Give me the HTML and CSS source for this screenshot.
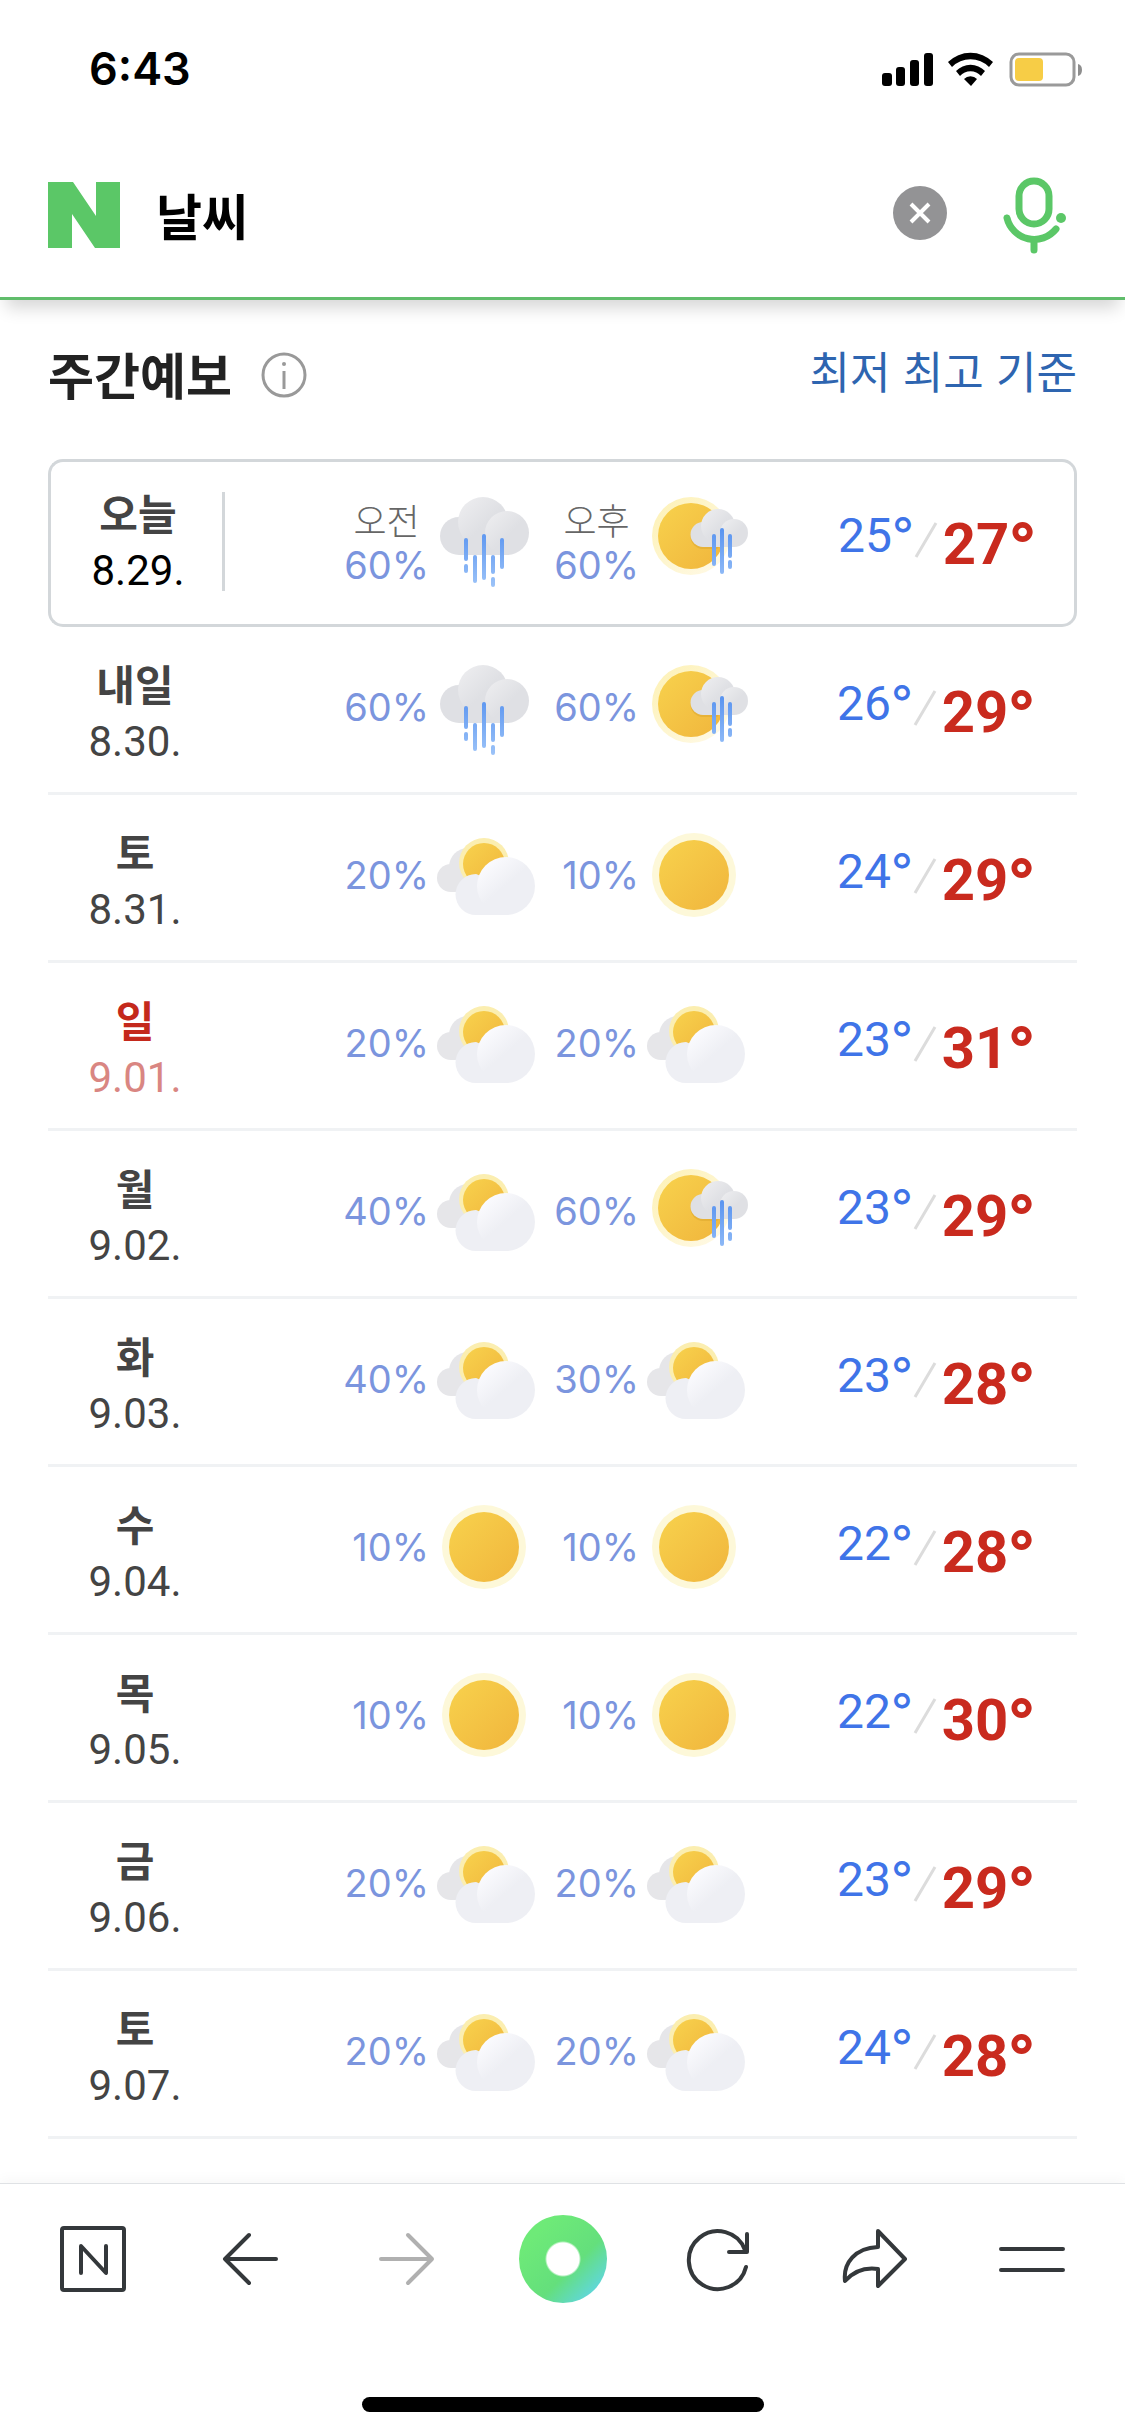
FILE: index.html
```
<!DOCTYPE html>
<html lang="ko">
<head>
<meta charset="utf-8">
<meta name="viewport" content="width=device-width, initial-scale=1">
<title>날씨</title>
<link rel="stylesheet" href="styles.css">
</head>
<body>
<svg class="sprite" aria-hidden="true">
  <defs>
    <linearGradient id="g-sun" x1="0.1" y1="0.1" x2="0.9" y2="0.9">
      <stop offset="0" stop-color="#f7cf4b"/><stop offset="1" stop-color="#f1b83e"/>
    </linearGradient>
    <linearGradient id="g-halo" x1="0" y1="0" x2="1" y2="1">
      <stop offset="0" stop-color="#fdf1b4"/><stop offset="1" stop-color="#fffaea"/>
    </linearGradient>
    <linearGradient id="g-grey" x1="0" y1="0" x2="0.9" y2="0.9">
      <stop offset="0" stop-color="#efeff1"/><stop offset="0.6" stop-color="#dfe0e4"/>
    </linearGradient>
    <linearGradient id="g-white" x1="0.1" y1="0.1" x2="0.7" y2="0.8">
      <stop offset="0" stop-color="#fcfcff"/><stop offset="0.6" stop-color="#eeeff4"/>
    </linearGradient>
    <linearGradient id="g-drop" gradientUnits="userSpaceOnUse" x1="0" y1="45" x2="0" y2="102">
      <stop offset="0" stop-color="#5b95f0"/><stop offset="1" stop-color="#9cc3f8"/>
    </linearGradient>
  </defs>
  <symbol id="w-rain" viewBox="0 0 108 108">
    <path d="M27 32a19 19 0 0 0 0 38h48V50L40 32z" fill="#dfe0e4"/>
    <circle cx="51" cy="37" r="25" fill="url(#g-grey)"/>
    <circle cx="75" cy="48" r="22" fill="url(#g-grey)"/>
    <path d="M34 55v19M34 81v5M43 72v24M52 51v42M61 72v15M61 94v6M70 55v27" fill="none" stroke="url(#g-drop)" stroke-width="4" stroke-linecap="round"/>
  </symbol>
  <symbol id="w-sunrain" viewBox="0 0 108 108">
    <circle cx="49" cy="51" r="39" fill="url(#g-halo)"/>
    <circle cx="49" cy="51" r="33" fill="url(#g-sun)"/>
    <path d="M61 39a12 12 0 0 0 0 25h14l4-4V40z" fill="#dca62c" opacity="0.5"/>
    <path d="M61 37a12 12 0 0 0 0 25h31V48L72 37z" fill="#dfe0e4"/>
    <circle cx="76" cy="41" r="17" fill="url(#g-grey)"/>
    <circle cx="92" cy="48" r="14" fill="url(#g-grey)"/>
    <path d="M72 51v28M80 45v42M88 51v20M88 77v5" fill="none" stroke="url(#g-drop)" stroke-width="4" stroke-linecap="round"/>
  </symbol>
  <symbol id="w-partly" viewBox="0 0 108 108">
    <circle cx="36" cy="46" r="19" fill="#e6e6e9"/>
    <path d="M19 43a14 14 0 0 0 0 28h25V50z" fill="#e6e6e9"/>
    <circle cx="52" cy="42" r="25" fill="#fbeeb0"/>
    <circle cx="52" cy="43" r="21" fill="url(#g-sun)"/>
    <path d="M44 53a20 20 0 0 0 0 41h30V65z" fill="#eeeff4"/>
    <circle cx="74" cy="65" r="29" fill="url(#g-white)"/>
  </symbol>
  <symbol id="w-sun" viewBox="0 0 108 108">
    <circle cx="52" cy="54" r="42" fill="#fdf8d9"/>
    <circle cx="52" cy="54" r="35" fill="url(#g-sun)"/>
  </symbol>
  <symbol id="slash" viewBox="0 0 24 38">
    <path d="M2 36L22 2" fill="none" stroke="#dcdcdc" stroke-width="3"/>
  </symbol>
</svg>

<div class="status">
  <time>6:43</time>
  <svg width="202" height="36" viewBox="0 0 202 36" aria-hidden="true">
    <g><rect x="1" y="22" width="10" height="13" rx="3"/><rect x="15" y="16" width="9" height="19" rx="3"/><rect x="29" y="9" width="9" height="26" rx="3"/><rect x="43" y="2" width="9" height="33" rx="3"/></g>
    <path d="M67 11a32 32 0 0 1 45 0l-4 5a26 26 0 0 0-37 0z"/>
    <path d="M75 20a20 20 0 0 1 29 0l-4 5a14 14 0 0 0-21 0z"/>
    <path d="M83 28a9 9 0 0 1 13 0l-6 7z"/>
    <rect x="130" y="3" width="63" height="31" rx="8" fill="none" stroke="#9a9a9a" stroke-width="3"/>
    <rect x="134" y="7" width="28" height="23" rx="4" fill="#f7cd46"/>
    <path d="M197 13q4 1 4 6t-4 6z" fill="#8e8e8e"/>
  </svg>
</div>

<header class="search">
  <a href="#" aria-label="네이버">
    <svg width="72" height="66" viewBox="0 0 72 66"><path d="M0 0h25l23 34V0h24v66H47L24 32v34H0z" fill="#5bc767"/></svg>
  </a>
  <input type="text" value="날씨" aria-label="검색어">
  <button type="button" class="clear" aria-label="지우기">
    <svg width="54" height="54" viewBox="0 0 54 54"><circle cx="27" cy="27" r="27" fill="#939395"/><path d="M18 18l18 18M36 18L18 36" stroke="#fff" stroke-width="4"/></svg>
  </button>
  <button type="button" class="mic" aria-label="음성 검색">
    <svg width="66" height="80" viewBox="0 0 66 80"><g fill="none" stroke="#5bc767" stroke-width="7" stroke-linecap="round"><rect x="17" y="6" width="30" height="43" rx="15"/><path d="M5 43a28 28 0 0 0 49 11M32 66v9"/></g><circle cx="59" cy="43" r="5" fill="#5bc767"/></svg>
  </button>
</header>

<main>
  <div class="title">
    <h1>주간예보</h1>
    <button type="button" aria-label="안내">
      <svg width="46" height="46" viewBox="0 0 46 46"><circle cx="23" cy="23" r="21" fill="none" stroke="#999" stroke-width="3"/><path d="M23 19v18" stroke="#999" stroke-width="3"/><circle cx="23" cy="12" r="2" fill="#999"/></svg>
    </button>
    <a href="#">최저 최고 기준</a>
  </div>
  <table>
    <tbody>
      <tr class="today">
        <th scope="row"><span class="day">오늘</span><span class="date">8.29.</span></th>
        <td><div class="half"><span class="rate"><small>오전</small>60%</span><svg><use href="#w-rain"/></svg></div></td>
        <td><div class="half"><span class="rate"><small>오후</small>60%</span><svg><use href="#w-sunrain"/></svg></div></td>
        <td><div class="temps"><span class="low">25<i>°</i></span><svg><use href="#slash"/></svg><strong>27<i>°</i></strong></div></td>
      </tr>
      <tr>
        <th scope="row"><span class="day">내일</span><span class="date">8.30.</span></th>
        <td><div class="half"><span class="rate">60%</span><svg><use href="#w-rain"/></svg></div></td>
        <td><div class="half"><span class="rate">60%</span><svg><use href="#w-sunrain"/></svg></div></td>
        <td><div class="temps"><span class="low">26<i>°</i></span><svg><use href="#slash"/></svg><strong>29<i>°</i></strong></div></td>
      </tr>
      <tr>
        <th scope="row"><span class="day">토</span><span class="date">8.31.</span></th>
        <td><div class="half"><span class="rate">20%</span><svg><use href="#w-partly"/></svg></div></td>
        <td><div class="half"><span class="rate">10%</span><svg><use href="#w-sun"/></svg></div></td>
        <td><div class="temps"><span class="low">24<i>°</i></span><svg><use href="#slash"/></svg><strong>29<i>°</i></strong></div></td>
      </tr>
      <tr class="sunday">
        <th scope="row"><span class="day">일</span><span class="date">9.01.</span></th>
        <td><div class="half"><span class="rate">20%</span><svg><use href="#w-partly"/></svg></div></td>
        <td><div class="half"><span class="rate">20%</span><svg><use href="#w-partly"/></svg></div></td>
        <td><div class="temps"><span class="low">23<i>°</i></span><svg><use href="#slash"/></svg><strong>31<i>°</i></strong></div></td>
      </tr>
      <tr>
        <th scope="row"><span class="day">월</span><span class="date">9.02.</span></th>
        <td><div class="half"><span class="rate">40%</span><svg><use href="#w-partly"/></svg></div></td>
        <td><div class="half"><span class="rate">60%</span><svg><use href="#w-sunrain"/></svg></div></td>
        <td><div class="temps"><span class="low">23<i>°</i></span><svg><use href="#slash"/></svg><strong>29<i>°</i></strong></div></td>
      </tr>
      <tr>
        <th scope="row"><span class="day">화</span><span class="date">9.03.</span></th>
        <td><div class="half"><span class="rate">40%</span><svg><use href="#w-partly"/></svg></div></td>
        <td><div class="half"><span class="rate">30%</span><svg><use href="#w-partly"/></svg></div></td>
        <td><div class="temps"><span class="low">23<i>°</i></span><svg><use href="#slash"/></svg><strong>28<i>°</i></strong></div></td>
      </tr>
      <tr>
        <th scope="row"><span class="day">수</span><span class="date">9.04.</span></th>
        <td><div class="half"><span class="rate">10%</span><svg><use href="#w-sun"/></svg></div></td>
        <td><div class="half"><span class="rate">10%</span><svg><use href="#w-sun"/></svg></div></td>
        <td><div class="temps"><span class="low">22<i>°</i></span><svg><use href="#slash"/></svg><strong>28<i>°</i></strong></div></td>
      </tr>
      <tr>
        <th scope="row"><span class="day">목</span><span class="date">9.05.</span></th>
        <td><div class="half"><span class="rate">10%</span><svg><use href="#w-sun"/></svg></div></td>
        <td><div class="half"><span class="rate">10%</span><svg><use href="#w-sun"/></svg></div></td>
        <td><div class="temps"><span class="low">22<i>°</i></span><svg><use href="#slash"/></svg><strong>30<i>°</i></strong></div></td>
      </tr>
      <tr>
        <th scope="row"><span class="day">금</span><span class="date">9.06.</span></th>
        <td><div class="half"><span class="rate">20%</span><svg><use href="#w-partly"/></svg></div></td>
        <td><div class="half"><span class="rate">20%</span><svg><use href="#w-partly"/></svg></div></td>
        <td><div class="temps"><span class="low">23<i>°</i></span><svg><use href="#slash"/></svg><strong>29<i>°</i></strong></div></td>
      </tr>
      <tr>
        <th scope="row"><span class="day">토</span><span class="date">9.07.</span></th>
        <td><div class="half"><span class="rate">20%</span><svg><use href="#w-partly"/></svg></div></td>
        <td><div class="half"><span class="rate">20%</span><svg><use href="#w-partly"/></svg></div></td>
        <td><div class="temps"><span class="low">24<i>°</i></span><svg><use href="#slash"/></svg><strong>28<i>°</i></strong></div></td>
      </tr>
    </tbody>
  </table>
</main>

<nav class="toolbar">
  <div class="tools">
    <button type="button" aria-label="홈"><svg viewBox="0 0 88 88"><rect x="13" y="13" width="62" height="62" rx="2"/><path d="M32 58V31l25 27V31"/></svg></button>
    <button type="button" aria-label="뒤로"><svg viewBox="0 0 88 88"><path d="M70 44H19M43 20L19 44l24 24"/></svg></button>
    <button type="button" class="off" aria-label="앞으로" disabled><svg viewBox="0 0 88 88"><path d="M19 44h51M46 20l24 24-24 24"/></svg></button>
    <button type="button" class="green" aria-label="그린닷"></button>
    <button type="button" aria-label="새로고침"><svg viewBox="0 0 88 88"><path d="M71 52a29 29 0 1 1-1-17M72 19v18H54"/></svg></button>
    <button type="button" aria-label="공유"><svg viewBox="0 0 88 88"><path d="M46 16l27 28-27 27V54c-14-2-24 2-33 12C11 48 23 33 46 32z"/></svg></button>
    <button type="button" aria-label="메뉴"><svg viewBox="0 0 88 88"><path d="M13 34h62M13 55h62"/></svg></button>
  </div>
  <div class="home-bar"></div>
</nav>
</body>
</html>
```
FILE: styles.css
```
* { box-sizing: border-box; }

body {
  margin: 0;
  min-height: 100vh;
  display: flex;
  flex-direction: column;
  background: #fff;
  color: #000;
  font-family: "Noto Sans CJK KR", sans-serif;
}

button {
  padding: 0;
  border: 0;
  background: none;
  color: inherit;
}

svg { display: block; }
a { text-decoration: none; }
i { font-style: normal; }

.sprite {
  position: absolute;
  width: 0;
  height: 0;
}

/* status bar */
.status {
  display: flex;
  justify-content: space-between;
  align-items: center;
  padding: 42px 42px 0 89px;
}
.status time {
  font: 600 45px/54px Inter, sans-serif;
}

/* search header */
.search {
  display: flex;
  align-items: center;
  margin-top: 36px;
  height: 168px;
  padding: 0 57px 0 48px;
  border-bottom: 3px solid #60bd6b;
  box-shadow: 0 14px 16px -6px rgba(0, 0, 0, 0.16);
}
.search input {
  flex: 1;
  min-width: 0;
  margin-left: 36px;
  padding: 0 0 2px;
  border: 0;
  outline: 0;
  background: none;
  font: 700 50px/72px "Noto Sans CJK KR", sans-serif;
  color: #000;
}
.search .clear { padding-bottom: 4px; }
.search .mic { margin-left: 55px; }

main {
  flex: 1;
  padding: 0 48px 44px;
}

.title {
  display: flex;
  align-items: center;
  height: 159px;
  padding-bottom: 9px;
}
.title h1 {
  margin: 0 29px 0 0;
  padding-bottom: 4px;
  font-size: 50px;
  line-height: 72px;
  font-weight: 700;
  color: #222;
}
.title a {
  margin-left: auto;
  padding-bottom: 10px;
  font-size: 44px;
  line-height: 64px;
  font-weight: 400;
  color: #2e65b0;
}

/* weekly table */
table {
  width: 100%;
  border-spacing: 0;
}
th, td {
  padding: 26px 0 31px;
  border-bottom: 3px solid #f0f2f4;
  vertical-align: top;
  font-weight: 400;
}
th {
  position: relative;
  width: 174px;
  padding: 29px 0 0;
  text-align: center;
  color: #444;
}
td:nth-child(3) { width: 210px; }
td:nth-child(4) {
  width: 327px;
  padding-right: 42px;
  padding-bottom: 0;
}

.day, .date { display: block; }
.day {
  font-size: 42px;
  line-height: 54px;
  font-weight: 700;
}
.date {
  font: 400 42px/64px Roboto, sans-serif;
}
.sunday .day { color: #c4291c; }
.sunday .date { color: #d98682; }

.half {
  display: flex;
  justify-content: flex-end;
  align-items: center;
}
.half svg {
  width: 108px;
  height: 108px;
  margin-left: 3px;
}
.rate {
  display: flex;
  flex-direction: column;
  align-items: center;
  font: 400 38px/46px Inter, sans-serif;
  color: #7b95de;
}
.rate small {
  font: 300 36px/46px "Noto Sans CJK KR", sans-serif;
  color: #666;
}

.temps {
  display: flex;
  justify-content: flex-end;
  font-family: Roboto, sans-serif;
}
.temps i { font-family: Inter, sans-serif; }
.low {
  font-size: 48px;
  line-height: 100px;
  color: #3f74e8;
}
.temps svg {
  width: 24px;
  height: 38px;
  margin: 36px 5px 0 0;
}
.temps strong {
  font-size: 58px;
  line-height: 116px;
  font-weight: 700;
  color: #c92a1e;
}

/* today's row is a rounded card */
.today th, .today td {
  border-top: 3px solid #d3d7da;
  border-bottom-color: #d3d7da;
  padding-top: 23px;
}
.today th {
  padding-left: 3px;
  border-left: 3px solid #d3d7da;
  border-radius: 15px 0 0 15px;
}
.today td:last-child {
  padding-right: 38px;
  border-right: 3px solid #d3d7da;
  border-radius: 0 15px 15px 0;
}
.today th::after {
  content: "";
  position: absolute;
  top: 30px;
  right: -3px;
  width: 3px;
  height: 99px;
  background: #d3d7da;
}
.today .date { color: #000; }
.today .rate { padding-top: 6px; }

/* bottom toolbar */
.toolbar {
  border-top: 1px solid #dfe2e5;
  box-shadow: 0 -4px 12px rgba(0, 0, 0, 0.03);
}
.tools {
  display: flex;
  justify-content: space-between;
  padding: 31px 49px 0;
}
.tools button, .tools svg {
  width: 88px;
  height: 88px;
}
.tools svg {
  fill: none;
  stroke: #34383b;
  stroke-width: 4;
  stroke-linecap: round;
  stroke-linejoin: round;
}
.tools .off svg { stroke: #b0b0b0; }
.tools .green {
  border-radius: 50%;
  background:
    radial-gradient(circle, #fff 16px, transparent 18px),
    linear-gradient(135deg, #6eea78 20%, #64df7c 60%, #5fd6e6 90%);
}
.home-bar {
  width: 402px;
  max-width: 60%;
  height: 15px;
  margin: 94px auto 24px;
  border-radius: 8px;
  background: #000;
}
```
